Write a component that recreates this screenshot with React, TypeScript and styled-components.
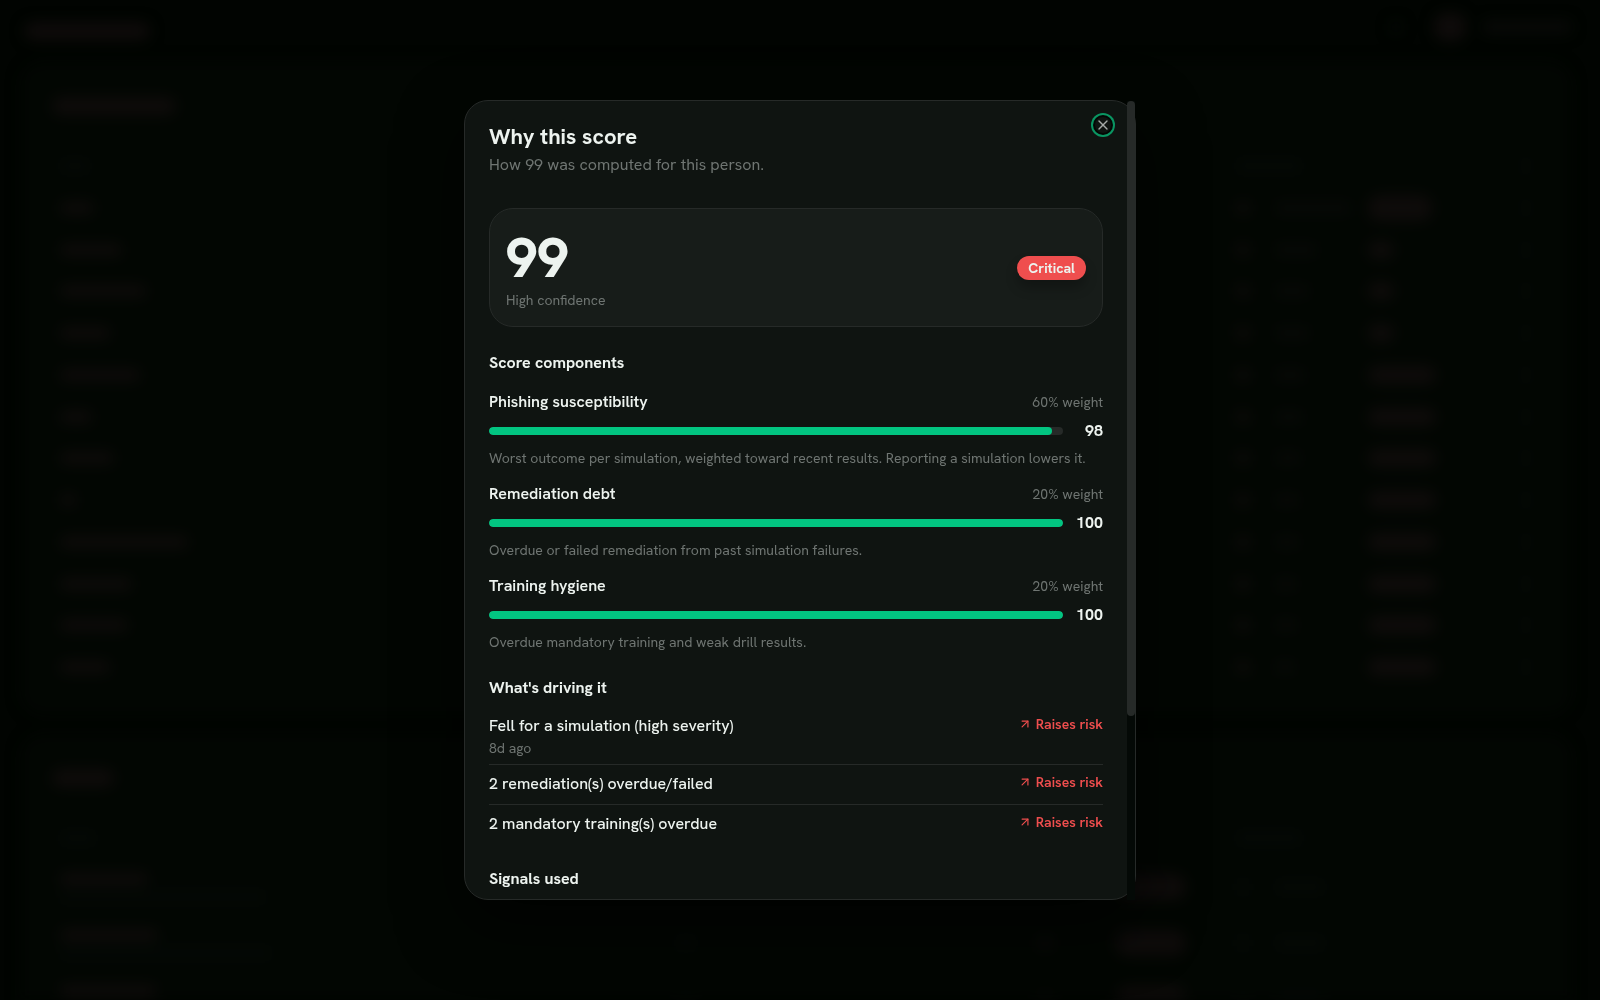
import React from 'react';
import styled, { createGlobalStyle } from 'styled-components';
import { ArrowUpRight, X } from 'lucide-react';

const GlobalStyle = createGlobalStyle`
  *, *::before, *::after { box-sizing: border-box; }
  html, body, #root { height: 100%; }
  body {
    margin: 0;
    overflow: hidden;
    background: #010401;
    color: #edf3ef;
    font-family: "HK Grotesk", "Hanken Grotesk", Inter, "Liberation Sans", sans-serif;
    font-size: 16px;
    line-height: 24px;
  }
  h1, h2, h3, p, ul { margin: 0; padding: 0; }
  ul { list-style: none; }
`;

/* ---------- dimmed page behind the dialog ---------- */

const Page = styled.div`
  height: 100vh;
  overflow: hidden;
  padding: 0 28px 0 20px;
  filter: blur(7px);
`;

const TopBar = styled.header`
  display: flex;
  align-items: center;
  justify-content: space-between;
  height: 61px;
  padding: 0 0 0 4px;
`;

const Account = styled.div`
  display: flex;
  align-items: center;
  gap: 16px;
  padding-bottom: 8px;
`;

const Panel = styled.section<{ $height: number }>`
  height: ${(p) => p.$height}px;
  margin-bottom: 17px;
  padding: 29px 40px;
  border-radius: 24px;
  background: #020602;
`;

const PanelTitle = styled.div`
  display: flex;
  align-items: center;
  height: 32px;
  margin: 0 0 23px -8px;
`;

type Tone = 'strong' | 'soft' | 'faint';

const tones: Record<Tone, string> = {
  strong: '#0e0b0a',
  soft: '#080907',
  faint: '#050906',
};

const Ghost = styled.span<{ $w: number; $h?: number; $tone?: Tone }>`
  display: block;
  flex: none;
  width: ${(p) => p.$w}px;
  height: ${(p) => p.$h ?? 12}px;
  border-radius: 12px;
  background: ${(p) => tones[p.$tone ?? 'strong']};
`;

const DeptRow = styled.div`
  display: grid;
  grid-template-columns: 1fr 39px 93px 152px 12px;
  align-items: center;
  height: 42px;
  &:nth-child(4n) { height: 41px; }
`;

const PeopleRow = styled.div`
  display: grid;
  grid-template-columns: 1fr 360px 80px 120px 39px 257px;
  align-items: center;
  height: 56px;
`;

const PersonCell = styled.div`
  display: grid;
  gap: 8px;
`;

const departments = [
  { name: 34, score: 76, level: 64, tall: true },
  { name: 62, score: 42, level: 26 },
  { name: 86, score: 34, level: 26 },
  { name: 50, score: 34, level: 26 },
  { name: 80, score: 30, level: 68 },
  { name: 32, score: 28, level: 68 },
  { name: 54, score: 26, level: 68 },
  { name: 16, score: 24, level: 68 },
  { name: 128, score: 24, level: 68 },
  { name: 72, score: 22, level: 68 },
  { name: 68, score: 22, level: 68 },
  { name: 50, score: 20, level: 68 },
];

const people = [
  { name: 88, mail: 206 },
  { name: 98, mail: 212 },
  { name: 96, mail: 200 },
];

function Backdrop() {
  return (
    <Page aria-hidden="true">
      <TopBar>
        <Ghost $w={126} $h={18} />
        <Account>
          <Ghost $w={12} $tone="faint" />
          <span />
          <Ghost $w={32} $h={28} />
          <Ghost $w={90} $h={14} $tone="soft" />
        </Account>
      </TopBar>
      <Panel $height={655}>
        <PanelTitle>
          <Ghost $w={124} $h={18} />
        </PanelTitle>
        <DeptRow>
          <Ghost $w={30} $h={10} $tone="faint" />
          <Ghost $w={66} $h={10} $tone="faint" />
          <span />
          <span />
          <Ghost $w={12} $h={10} $tone="faint" />
        </DeptRow>
        {departments.map((d, i) => (
          <DeptRow key={i}>
            <Ghost $w={d.name} />
            <Ghost $w={14} />
            <Ghost $w={d.score} $h={10} $tone="soft" />
            <Ghost $w={d.level} $h={d.tall ? 26 : 18} />
            <Ghost $w={12} $h={10} $tone="faint" />
          </DeptRow>
        ))}
      </Panel>
      <Panel $height={655}>
        <PanelTitle>
          <Ghost $w={62} $h={18} />
        </PanelTitle>
        <DeptRow>
          <Ghost $w={36} $h={10} $tone="faint" />
          <Ghost $w={66} $h={10} $tone="faint" />
        </DeptRow>
        {people.map((p, i) => (
          <PeopleRow key={i}>
            <PersonCell>
              <Ghost $w={p.name} />
              <Ghost $w={p.mail} $h={8} $tone="faint" />
            </PersonCell>
            <Ghost $w={20} $h={10} $tone="faint" />
            <Ghost $w={18} $h={12} $tone="soft" />
            <Ghost $w={70} $h={26} />
            <Ghost $w={14} $tone="faint" />
            <Ghost $w={50} $h={10} $tone="faint" />
          </PeopleRow>
        ))}
      </Panel>
    </Page>
  );
}

/* ---------- dialog ---------- */

const Overlay = styled.div`
  position: fixed;
  inset: 0;
  display: flex;
  align-items: center;
  justify-content: center;
`;

const Dialog = styled.div`
  position: relative;
  display: flex;
  width: 672px;
  max-width: 100%;
  max-height: 80vh;
  border: 1px solid #262a28;
  border-radius: 24px;
  background: #0f1411;
  box-shadow: 0 24px 64px rgba(0, 0, 0, 0.7);
`;

const Scroller = styled.div`
  flex: 1;
  overflow-y: auto;
  padding: 24px 32px 24px 24px;
  border-radius: 23px;
  scrollbar-width: none;
`;

const Rail = styled.div`
  position: absolute;
  top: 0;
  right: 0;
  bottom: -1px;
  width: 8px;
  background: #040906;
`;

const Thumb = styled.div`
  height: 77%;
  border-radius: 4px;
  background: #262a28;
`;

const CloseButton = styled.button`
  position: absolute;
  top: 16px;
  right: 24px;
  display: grid;
  place-items: center;
  width: 16px;
  height: 16px;
  padding: 0;
  border: 0;
  border-radius: 50%;
  background: #0f1411;
  color: #a5aaa7;
  box-shadow: 0 0 0 2px #030704, 0 0 0 4px #0a9562;
  cursor: pointer;
`;

const Header = styled.header`
  display: grid;
  gap: 4px;
  margin-bottom: 31px;
`;

const Title = styled.h1`
  font-size: 22px;
  line-height: 24px;
  font-weight: 700;
`;

const Muted = styled.p`
  color: #6f7572;
`;

const Small = styled.p`
  color: #6f7572;
  font-size: 14px;
  line-height: 20px;
`;

const ScoreCard = styled.div`
  display: flex;
  align-items: center;
  justify-content: space-between;
  padding: 17px 16px 16px;
  border: 1px solid #262a28;
  border-radius: 24px;
  background: #171c19;
`;

const Score = styled.p`
  font-size: 56px;
  line-height: 64px;
  font-weight: 800;
`;

const Badge = styled.span`
  padding: 2px 11px;
  border-radius: 12px;
  background: #ef4e4e;
  font-size: 14px;
  line-height: 20px;
  font-weight: 700;
  box-shadow: 0 8px 12px rgba(0, 0, 0, 0.25);
`;

const Section = styled.section`
  margin-top: 24px;
`;

const Heading = styled.h2`
  font-size: 16px;
  line-height: 24px;
  font-weight: 700;
`;

const Components = styled.ul`
  display: grid;
  gap: 14px;
  margin-top: 15px;
`;

const Component = styled.li`
  display: grid;
  gap: 5px;
`;

const Row = styled.div`
  display: flex;
  align-items: center;
  justify-content: space-between;
`;

const Label = styled.h3`
  font-size: 16px;
  line-height: 24px;
  font-weight: 600;
`;

const Track = styled.div`
  flex: 1;
  height: 8px;
  border-radius: 4px;
  background: #262a28;
  overflow: hidden;
`;

const Fill = styled.div`
  height: 100%;
  border-radius: 4px;
  background: #02c581;
`;

const Value = styled.span`
  width: 40px;
  text-align: right;
  font-weight: 700;
  font-variant-numeric: tabular-nums;
`;

const Drivers = styled.ul`
  margin-top: 7px;
`;

const Driver = styled.li`
  display: flex;
  align-items: flex-start;
  justify-content: space-between;
  padding: 7px 0 8px;
  border-bottom: 1px solid #262a28;
  font-weight: 500;
  &:first-child { padding-bottom: 6px; }
  &:last-child { padding-bottom: 7px; border-bottom: 0; }
`;

const When = styled(Small)`
  font-weight: 400;
`;

const Effect = styled.span`
  display: inline-flex;
  align-items: center;
  gap: 4px;
  color: #ef4e4e;
  font-size: 14px;
  line-height: 20px;
  font-weight: 600;
`;

const SignalList = styled.ul`
  min-height: 118px;
`;

const components = [
  {
    name: 'Phishing susceptibility',
    weight: 60,
    value: 98,
    note: 'Worst outcome per simulation, weighted toward recent results. Reporting a simulation lowers it.',
  },
  {
    name: 'Remediation debt',
    weight: 20,
    value: 100,
    note: 'Overdue or failed remediation from past simulation failures.',
  },
  {
    name: 'Training hygiene',
    weight: 20,
    value: 100,
    note: 'Overdue mandatory training and weak drill results.',
  },
];

const drivers = [
  { text: 'Fell for a simulation (high severity)', when: '8d ago' },
  { text: '2 remediation(s) overdue/failed' },
  { text: '2 mandatory training(s) overdue' },
];

export default function App() {
  return (
    <>
      <GlobalStyle />
      <Backdrop />
      <Overlay>
        <Dialog role="dialog" aria-modal="true" aria-labelledby="dialog-title">
          <Scroller>
            <Header>
              <Title id="dialog-title">Why this score</Title>
              <Muted>How 99 was computed for this person.</Muted>
            </Header>

            <ScoreCard>
              <div>
                <Score>99</Score>
                <Small>High confidence</Small>
              </div>
              <Badge>Critical</Badge>
            </ScoreCard>

            <Section>
              <Heading>Score components</Heading>
              <Components>
                {components.map((c) => (
                  <Component key={c.name}>
                    <Row>
                      <Label>{c.name}</Label>
                      <Small>{c.weight}% weight</Small>
                    </Row>
                    <Row>
                      <Track role="progressbar" aria-label={c.name} aria-valuenow={c.value}>
                        <Fill style={{ width: `${c.value}%` }} />
                      </Track>
                      <Value>{c.value}</Value>
                    </Row>
                    <Small>{c.note}</Small>
                  </Component>
                ))}
              </Components>
            </Section>

            <Section>
              <Heading>What's driving it</Heading>
              <Drivers>
                {drivers.map((d) => (
                  <Driver key={d.text}>
                    <div>
                      <p>{d.text}</p>
                      {d.when && <When>{d.when}</When>}
                    </div>
                    <Effect>
                      <ArrowUpRight size={14} />
                      Raises risk
                    </Effect>
                  </Driver>
                ))}
              </Drivers>
            </Section>

            <Section>
              <Heading>Signals used</Heading>
              <SignalList />
            </Section>
          </Scroller>
          <Rail aria-hidden="true">
            <Thumb />
          </Rail>
          <CloseButton type="button" aria-label="Close">
            <X size={16} strokeWidth={2} />
          </CloseButton>
        </Dialog>
      </Overlay>
    </>
  );
}
